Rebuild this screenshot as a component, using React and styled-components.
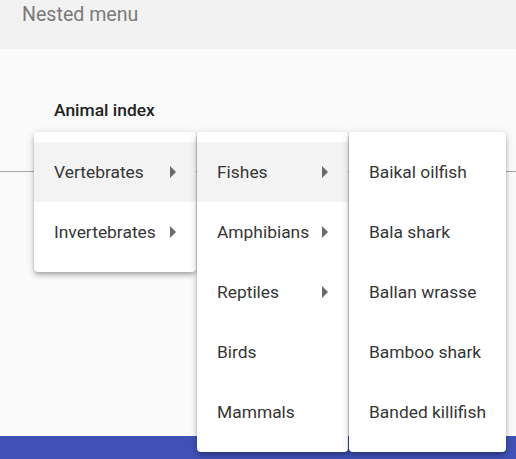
import React from "react";
import styled, { createGlobalStyle } from "styled-components";

const GlobalStyle = createGlobalStyle`
  html, body {
    margin: 0;
    padding: 0;
    height: 100%;
    background: #fafafa;
    font-family: Roboto, "Liberation Sans", sans-serif;
  }
  #root {
    height: 100%;
  }
`;

const Page = styled.div`
  display: flex;
  flex-direction: column;
  height: 459px;
  overflow: hidden;
`;

const Header = styled.div`
  height: 49px;
  flex-shrink: 0;
  background: #f2f2f2;
  padding: 2px 0 0 22px;
  box-sizing: border-box;
  font-size: 19.6px;
  line-height: 26px;
  color: #7a7a7a;
`;

const Main = styled.div`
  position: relative;
  height: 387px;
  flex-shrink: 0;
  background: #fafafa;
  padding-top: 50px;
  box-sizing: border-box;
`;

const Label = styled.div`
  padding-left: 54px;
  font-size: 17.4px;
  line-height: 22px;
  font-weight: 500;
  color: #222;
`;

const Rule = styled.div`
  margin-top: 50px;
  height: 1px;
  background: #a8a8a8;
`;

const Footer = styled.div`
  flex: 1;
  background: #3f51b5;
`;

const Cascade = styled.div`
  position: absolute;
  top: 83px;
  left: 34px;
  display: flex;
  align-items: flex-start;
  gap: 1px;
`;

const Menu = styled.div`
  position: relative;
  width: ${(p) => p.$width}px;
  padding: 10px 0;
  background: #fff;
  border-radius: 4px;
  box-shadow: 0 2px 4px -1px rgba(0, 0, 0, 0.2), 0 4px 5px 0 rgba(0, 0, 0, 0.14),
    0 1px 10px 0 rgba(0, 0, 0, 0.12);
`;

const Item = styled.div`
  height: 60px;
  padding: 0 20px;
  display: flex;
  align-items: center;
  justify-content: space-between;
  font-size: 17.4px;
  color: #363636;
  background: ${(p) => (p.$active ? "#f3f3f3" : "transparent")};
`;

const Arrow = styled.span`
  width: 0;
  height: 0;
  border-top: 6px solid transparent;
  border-bottom: 6px solid transparent;
  border-left: 6px solid #6b6b6b;
`;

const menus = [
  {
    width: 162,
    items: [
      { label: "Vertebrates", sub: true, active: true },
      { label: "Invertebrates", sub: true },
    ],
  },
  {
    width: 151,
    items: [
      { label: "Fishes", sub: true, active: true },
      { label: "Amphibians", sub: true },
      { label: "Reptiles", sub: true },
      { label: "Birds" },
      { label: "Mammals" },
    ],
  },
  {
    width: 157,
    items: [
      { label: "Baikal oilfish" },
      { label: "Bala shark" },
      { label: "Ballan wrasse" },
      { label: "Bamboo shark" },
      { label: "Banded killifish" },
    ],
  },
];

const App = () => (
  <>
    <GlobalStyle />
    <Page>
      <Header>Nested menu</Header>
      <Main>
        <Label>Animal index</Label>
        <Rule />
        <Cascade>
          {menus.map((m, i) => (
            <Menu key={i} $width={m.width}>
              {m.items.map((it) => (
                <Item key={it.label} $active={it.active}>
                  <span>{it.label}</span>
                  {it.sub && <Arrow />}
                </Item>
              ))}
            </Menu>
          ))}
        </Cascade>
      </Main>
      <Footer />
    </Page>
  </>
);

export default App;
